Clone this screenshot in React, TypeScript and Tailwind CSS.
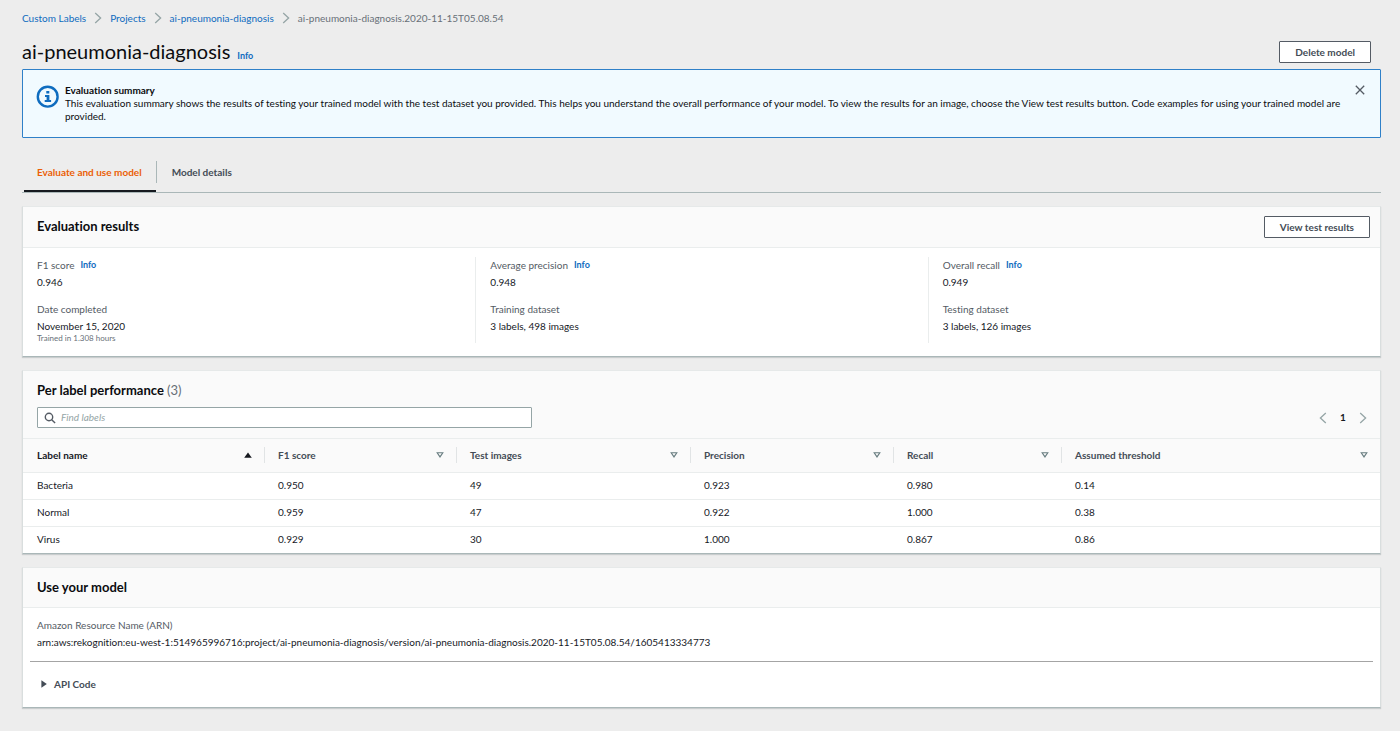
import type { ReactNode } from "react";

const crumbs = ["Custom Labels", "Projects", "ai-pneumonia-diagnosis"];

const columns = [
  { name: "Label name", width: "w-[241px]" },
  { name: "F1 score", width: "w-[192px]" },
  { name: "Test images", width: "w-[234px]" },
  { name: "Precision", width: "w-[203px]" },
  { name: "Recall", width: "w-[168px]" },
  { name: "Assumed threshold", width: "" },
];

const rows = [
  ["Bacteria", "0.950", "49", "0.923", "0.980", "0.14"],
  ["Normal", "0.959", "47", "0.922", "1.000", "0.38"],
  ["Virus", "0.929", "30", "1.000", "0.867", "0.86"],
];

function Chevron({ flip = false, className = "" }: { flip?: boolean; className?: string }) {
  return (
    <svg viewBox="0 0 8 12" className={`h-3 w-2 ${className}`} fill="none" stroke="currentColor" strokeWidth="1.3" aria-hidden="true">
      <path d={flip ? "M6.8 1 1.4 6l5.4 5" : "M1.2 1 6.6 6l-5.4 5"} />
    </svg>
  );
}

function InfoLink() {
  return (
    <a href="#info" className="text-[9px] font-bold text-[#0f6cbf]">
      Info
    </a>
  );
}

function Button({ children }: { children: ReactNode }) {
  return (
    <button type="button" className="h-[22px] rounded-[1px] border border-[#545b64] bg-white px-[15px] text-[10px] leading-5 font-bold text-[#444c56]">
      {children}
    </button>
  );
}

function Card({ children }: { children: ReactNode }) {
  return (
    <section className="border border-[#d9dede] border-t-[#e6e9e9] border-b-[#aab7b8] bg-white shadow-[0_1px_1px_0_rgba(0,28,36,0.15)]">
      {children}
    </section>
  );
}

function Field({ label, info, value, note }: { label: string; info?: boolean; value: string; note?: string }) {
  return (
    <div className="h-11">
      <div className="flex items-center gap-[6px] leading-4 text-[#545b64]">
        {label}
        {info && <InfoLink />}
      </div>
      <div className="mt-px leading-4">{value}</div>
      {note && <div className="text-[8px] leading-2 text-[#687078]">{note}</div>}
    </div>
  );
}

function SortIcon({ active }: { active: boolean }) {
  return active ? (
    <svg viewBox="0 0 8 6" className="h-1.5 w-2" fill="#16191f" aria-hidden="true">
      <path d="M4 0.4 7.8 5.8H0.2Z" />
    </svg>
  ) : (
    <svg viewBox="0 0 8 6" className="h-1.5 w-2" fill="none" stroke="#687d80" strokeWidth="1.1" aria-hidden="true">
      <path d="M1.2 0.8H6.8L4 4.9Z" />
    </svg>
  );
}

export default function App() {
  return (
    <main className="min-h-screen bg-[#ededed] pt-[10px] pr-[19px] pb-[22px] pl-[22px] font-[Lato,'Noto_Sans',sans-serif] text-[10px] text-[#16191f] [font-variant-ligatures:none]">
      <nav aria-label="Breadcrumb" className="flex h-4 items-center">
        {crumbs.map((c) => (
          <span key={c} className="flex items-center">
            <a href="#crumb" className="text-[#0f6cbf]">
              {c}
            </a>
            <Chevron className="mx-2 text-[#95a5a6]" />
          </span>
        ))}
        <span className="text-[#687078]">ai-pneumonia-diagnosis.2020-11-15T05.08.54</span>
      </nav>

      <header className="mt-[15px] flex h-[22px] items-center justify-between pr-[10px]">
        <h1 className="flex items-baseline gap-[7px] pt-[3px] text-[20px] leading-[22px] text-[#0b0c0f]">
          ai-pneumonia-diagnosis
          <InfoLink />
        </h1>
        <Button>Delete model</Button>
      </header>

      <section className="mt-[6px] flex min-h-[69px] items-start rounded-[1px] border border-[#2f80c8] bg-[#f1faff] px-[13px] py-[14px]">
        <svg viewBox="0 0 24 24" className="size-6 shrink-0" fill="none" aria-hidden="true">
          <circle cx="11.7" cy="12.7" r="9.9" stroke="#0f6cbf" strokeWidth="2.4" />
          <path d="M10.3 7h3v2.5h-3zM9 11h4.4v4.9h1.7v2.1H8.7v-2.1h1.9v-2.8H9z" fill="#0f6cbf" />
        </svg>
        <div className="ml-[5px] flex-1 pr-[10px] leading-[13px] text-[#0b0c0f]">
          <h2 className="font-bold">Evaluation summary</h2>
          <p>
            This evaluation summary shows the results of testing your trained model with the test dataset you provided. This helps you understand the overall performance of your model. To view the results for an image, choose the View test results button. Code examples for using your trained model are provided.
          </p>
        </div>
        <button type="button" aria-label="Dismiss" className="mt-[1px] mr-[2px]">
          <svg viewBox="0 0 10 10" className="size-[10px]" stroke="#545b64" strokeWidth="1.3" aria-hidden="true">
            <path d="M0.8 0.8 9.2 9.2M9.2 0.8 0.8 9.2" />
          </svg>
        </button>
      </section>

      <div role="tablist" className="mt-[16px] flex h-[39px] items-start border-b border-[#aab7b8] pl-[2px] font-bold">
        <button type="button" role="tab" aria-selected="true" className="h-[38px] border-b-2 border-[#16191f] pr-[14px] pl-[13px] text-[#eb5f07]">
          Evaluate and use model
        </button>
        <button type="button" role="tab" aria-selected="false" className="mt-[7px] h-[22px] border-l border-[#aab7b8] px-[15px] text-[#444c56]">
          Model details
        </button>
      </div>

      <div className="mt-[13px] flex flex-col gap-[13px]">
        <Card>
          <div className="flex h-[41px] items-center justify-between border-b border-[#eaeded] bg-[#fafafa] pr-[10px] pl-[14px]">
            <h2 className="text-[13px] font-bold text-[#0b0c0f]">Evaluation results</h2>
            <Button>View test results</Button>
          </div>
          <div className="grid h-[108px] grid-cols-3 py-[9px]">
            <div className="h-[86px] px-[14px]">
              <Field label="F1 score" info value="0.946" />
              <Field label="Date completed" value="November 15, 2020" note="Trained in 1.308 hours" />
            </div>
            <div className="h-[86px] border-l border-[#eaeded] px-[14px]">
              <Field label="Average precision" info value="0.948" />
              <Field label="Training dataset" value="3 labels, 498 images" />
            </div>
            <div className="h-[86px] border-l border-[#eaeded] px-[14px]">
              <Field label="Overall recall" info value="0.949" />
              <Field label="Testing dataset" value="3 labels, 126 images" />
            </div>
          </div>
        </Card>

        <Card>
          <div className="h-[68px] border-b border-[#eaeded] bg-[#fafafa] pt-[9px] pr-[13px] pl-[14px]">
            <h2 className="text-[13px] leading-5 font-bold text-[#0b0c0f]">
              Per label performance <span className="font-normal text-[#687078]">(3)</span>
            </h2>
            <div className="mt-[7px] flex items-center justify-between">
              <label className="flex h-[21px] w-[495px] items-center gap-[5px] rounded-[1px] border border-[#95a5a6] bg-white px-[6px]">
                <svg viewBox="0 0 12 12" className="size-3 shrink-0" fill="none" stroke="#545b64" strokeWidth="1.4" aria-hidden="true">
                  <circle cx="5" cy="5" r="3.7" />
                  <path d="m7.7 7.7 3.4 3.4" />
                </svg>
                <input type="search" aria-label="Find labels" placeholder="Find labels" className="min-w-0 flex-1 outline-none placeholder:text-[#95a5a6] placeholder:italic" />
              </label>
              <div className="flex items-center gap-[13px]">
                <button type="button" aria-label="Previous page" className="text-[#95a5a6]">
                  <Chevron flip />
                </button>
                <button type="button" className="w-[6px] font-bold">
                  1
                </button>
                <button type="button" aria-label="Next page" className="text-[#95a5a6]">
                  <Chevron />
                </button>
              </div>
            </div>
          </div>
          <table className="w-full table-fixed border-collapse text-left">
            <thead className="bg-[#fafafa]">
              <tr className="h-[33px] border-b border-[#eaeded]">
                {columns.map((c, i) => (
                  <th key={c.name} scope="col" className={`p-0 ${c.width}`}>
                    <div className={`flex h-4 items-center justify-between pr-[12px] ${i === 0 ? "pl-[14px]" : "border-l border-[#e1e4e5] pl-[13px] text-[#444c56]"}`}>
                      {c.name}
                      <SortIcon active={i === 0} />
                    </div>
                  </th>
                ))}
              </tr>
            </thead>
            <tbody>
              {rows.map((r) => (
                <tr key={r[0]} className="h-[27px] border-b border-[#eaeded] last:border-b-0">
                  {r.map((v, i) => (
                    <td key={i} className="py-0 pr-0 pl-[14px]">
                      {v}
                    </td>
                  ))}
                </tr>
              ))}
            </tbody>
          </table>
        </Card>

        <Card>
          <div className="flex h-10 items-center border-b border-[#eaeded] bg-[#fafafa] px-[14px]">
            <h2 className="text-[13px] font-bold text-[#0b0c0f]">Use your model</h2>
          </div>
          <div className="px-[14px] pt-[9px] leading-4">
            <div className="text-[#545b64]">Amazon Resource Name (ARN)</div>
            <div className="mt-px">arn:aws:rekognition:eu-west-1:514965996716:project/ai-pneumonia-diagnosis/version/ai-pneumonia-diagnosis.2020-11-15T05.08.54/1605413334773</div>
          </div>
          <hr className="mx-[7px] mt-[11px] border-[#a4a4a4]" />
          <button type="button" className="mt-[14px] mb-[15px] ml-[18px] flex h-4 items-center gap-[7px] font-bold text-[#444c56]">
            <svg viewBox="0 0 6 8" className="h-2 w-1.5" fill="currentColor" aria-hidden="true">
              <path d="M0.4 0.2 5.8 4 0.4 7.8Z" />
            </svg>
            API Code
          </button>
        </Card>
      </div>
    </main>
  );
}
